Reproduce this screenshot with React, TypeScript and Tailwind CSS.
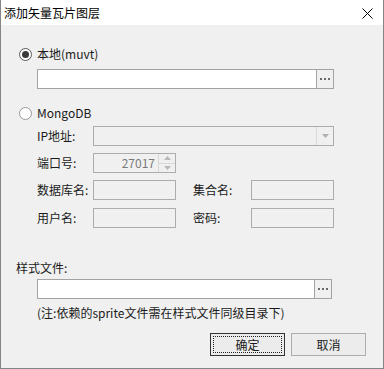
import React from "react";

function Dots() {
  return (
    <div className="flex items-center gap-[2px]">
      <div className="w-[2px] h-[2px] bg-[#6a6a6a]" />
      <div className="w-[2px] h-[2px] bg-[#6a6a6a]" />
      <div className="w-[2px] h-[2px] bg-[#6a6a6a]" />
    </div>
  );
}

function Box({ w }: { w: string }) {
  return <div className={`${w} h-[20px] border border-[#adadad] bg-[#f0f0f0]`} />;
}

export default function App() {
  return (
    <div className="w-[384px] h-[369px] bg-[#f0f0f0] border-x border-b border-[#858585] flex flex-col text-[12px] text-[#1a1a1a] font-['Microsoft_YaHei','Noto_Sans_CJK_SC',sans-serif] leading-none select-none">
      {/* Title bar */}
      <div className="h-[25px] bg-white flex items-center justify-between pl-[3px] pr-[10px]">
        <span className="text-[12px] text-black">添加矢量瓦片图层</span>
        <svg width="11" height="11" viewBox="0 0 11 11" className="mt-[1px]">
          <path d="M0.5 0.5 L10.5 10.5 M10.5 0.5 L0.5 10.5" stroke="#000" strokeWidth="1" />
        </svg>
      </div>

      {/* Radio 1 */}
      <div className="mt-[21px] h-[16px] flex items-center pl-[18px]">
        <div className="w-[13px] h-[13px] rounded-full border border-[#5a5a5a] bg-white flex items-center justify-center">
          <div className="w-[7px] h-[7px] rounded-full bg-[#3a3a3a]" />
        </div>
        <span className="ml-[5px]">本地(muvt)</span>
      </div>

      {/* Input 1 */}
      <div className="mt-[7px] pl-[36px]">
        <div className="w-[297px] h-[20px] border border-[#a3a3a3] bg-white flex justify-end">
          <div className="w-[17px] h-full border-l border-[#a3a3a3] bg-[#f0f0f0] flex items-center justify-center">
            <Dots />
          </div>
        </div>
      </div>

      {/* Radio 2 */}
      <div className="mt-[16px] h-[16px] flex items-center pl-[18px]">
        <div className="w-[13px] h-[13px] rounded-full border border-[#9a9a9a] bg-white" />
        <span className="ml-[5px]">MongoDB</span>
      </div>

      {/* IP */}
      <div className="mt-[5px] h-[20px] flex items-center pl-[36px]">
        <span className="w-[56px]">IP地址:</span>
        <div className="w-[241px] h-[20px] border border-[#adadad] bg-[#f0f0f0] flex justify-end">
          <div className="w-[17px] h-full border-l border-[#d8d8d8] flex items-center justify-center">
            <svg width="7" height="4" viewBox="0 0 7 4">
              <path d="M0 0 H7 L3.5 4 Z" fill="#b0b0b0" />
            </svg>
          </div>
        </div>
      </div>

      {/* Port */}
      <div className="mt-[7px] h-[20px] flex items-center pl-[36px]">
        <span className="w-[56px]">端口号:</span>
        <div className="w-[83px] h-[20px] border border-[#adadad] bg-[#f0f0f0] flex">
          <div className="flex-1 flex items-center justify-end pr-[3px] text-[#7a7a7a]">27017</div>
          <div className="w-[17px] h-full border-l border-[#d8d8d8] flex flex-col">
            <div className="flex-1 flex items-center justify-center border-b border-[#d8d8d8]">
              <svg width="7" height="4" viewBox="0 0 7 4">
                <path d="M0 4 H7 L3.5 0 Z" fill="#b8b8b8" />
              </svg>
            </div>
            <div className="flex-1 flex items-center justify-center">
              <svg width="7" height="4" viewBox="0 0 7 4">
                <path d="M0 0 H7 L3.5 4 Z" fill="#b8b8b8" />
              </svg>
            </div>
          </div>
        </div>
      </div>

      {/* DB / collection */}
      <div className="mt-[7px] h-[20px] flex items-center pl-[36px]">
        <span className="w-[56px]">数据库名:</span>
        <Box w="w-[83px]" />
        <span className="ml-[17px] w-[58px]">集合名:</span>
        <Box w="w-[83px]" />
      </div>

      {/* User / password */}
      <div className="mt-[8px] h-[20px] flex items-center pl-[36px]">
        <span className="w-[56px]">用户名:</span>
        <Box w="w-[83px]" />
        <span className="ml-[17px] w-[58px]">密码:</span>
        <Box w="w-[83px]" />
      </div>

      {/* Style file */}
      <div className="mt-[32px] h-[16px] flex items-center pl-[15px]">
        <span>样式文件:</span>
      </div>
      <div className="mt-[3px] pl-[36px]">
        <div className="w-[295px] h-[20px] border border-[#a3a3a3] bg-white flex justify-end">
          <div className="w-[17px] h-full border-l border-[#a3a3a3] bg-[#f0f0f0] flex items-center justify-center">
            <Dots />
          </div>
        </div>
      </div>
      <div className="mt-[6px] h-[16px] flex items-center pl-[36px]">
        <span>(注:依赖的sprite文件需在样式文件同级目录下)</span>
      </div>

      {/* Buttons */}
      <div className="mt-[12px] flex justify-end gap-[6px] pr-[17px]">
        <div className="w-[75px] h-[23px] border border-[#333333] bg-[#ececec] p-[2px]">
          <div className="w-full h-full border border-dotted border-[#222] flex items-center justify-center">
            确定
          </div>
        </div>
        <div className="w-[75px] h-[23px] border border-[#adadad] bg-[#ececec] flex items-center justify-center">
          取消
        </div>
      </div>
    </div>
  );
}
